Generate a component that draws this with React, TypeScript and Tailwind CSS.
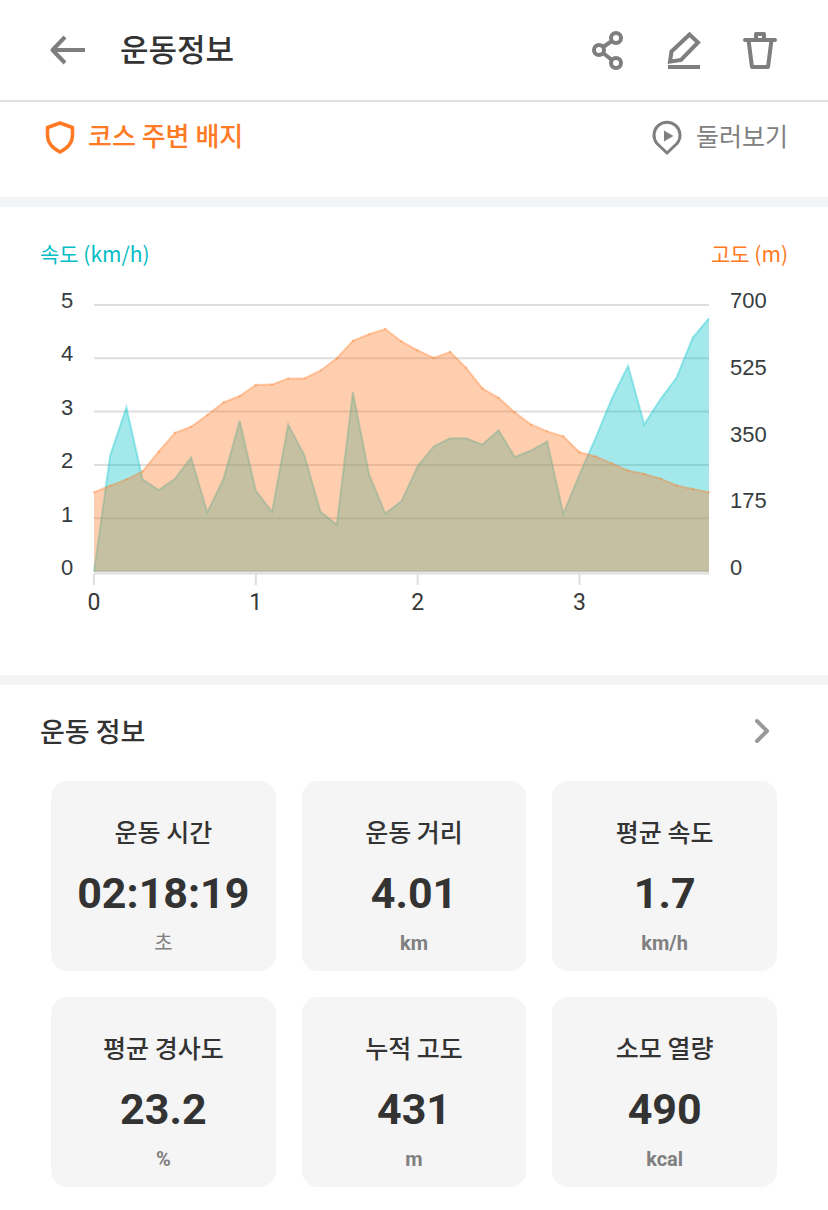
import React from "react";

const speed = [
  0, 2.18, 3.08, 1.73, 1.53, 1.74, 2.14, 1.11, 1.74, 2.83, 1.52, 1.12, 2.76, 2.18, 1.12, 0.88, 3.37, 1.82, 1.09, 1.32,
  1.98, 2.35, 2.5, 2.5, 2.38, 2.65, 2.15, 2.27, 2.44, 1.09, 1.82, 2.51, 3.25, 3.86, 2.76, 3.23, 3.64, 4.39, 4.75,
];
const altitude = [
  208, 225, 242, 263, 315, 364, 380, 411, 444, 461, 490, 491, 507, 507, 528, 560, 606, 623, 637, 604, 581, 561, 577,
  535, 481, 456, 418, 386, 368, 355, 313, 302, 284, 265, 256, 244, 226, 217, 208,
];

const LEFT = 54;
const RIGHT = 669;
const TOP = 15;
const BASE = 281.5;
const STEP = (RIGHT - LEFT) / 38;

function points(values: number[], max: number) {
  return values.map((v, i) => [LEFT + i * STEP, BASE - (v / max) * (BASE - TOP)]);
}
const toLine = (p: number[][]) => "M" + p.map(([x, y]) => `${x.toFixed(1)} ${y.toFixed(1)}`).join("L");
const toArea = (p: number[][]) => `${toLine(p)}L${RIGHT} ${BASE}L${LEFT} ${BASE}Z`;

function Chart() {
  const s = points(speed, 5);
  const a = points(altitude, 700);
  const ticks = [0, 1, 2, 3, 4, 5];
  return (
    <svg viewBox="0 -5 748 340" className="block h-auto w-full" role="img" aria-label="속도 / 고도">
      <g stroke="#dedede" strokeWidth="2">
        {ticks.map((t) => {
          const y = BASE - (t / 5) * (BASE - TOP);
          return <path key={t} d={`M${LEFT} ${y}H${RIGHT}`} />;
        })}
        <path d={`M${LEFT} 283.5H${RIGHT}`} />
        {[0, 1, 2, 3].map((t) => (
          <path key={t} d={`M${LEFT + t * 10 * STEP} 284v11`} />
        ))}
      </g>
      <path d={toArea(s)} fill="#05c3cb" fillOpacity="0.37" />
      <path d={toLine(s)} fill="none" stroke="#05c3cb" strokeOpacity="0.35" strokeWidth="2" />
      <path d={toArea(a)} fill="#ff7a24" fillOpacity="0.37" />
      <path d={toLine(a)} fill="none" stroke="#ff7a24" strokeOpacity="0.35" strokeWidth="2" />
      {a.map(([x, y], i) => (
        <circle key={i} cx={x} cy={y} r="1.1" fill="#ff7a24" fillOpacity="0.4" />
      ))}
      <g className="font-['Liberation_Sans',sans-serif] text-[22px]" fill="#373d3f">
        {ticks.map((t) => (
          <text key={t} x="21" y={285 - t * 53.4}>
            {t}
          </text>
        ))}
        {[0, 175, 350, 525, 700].map((t, i) => (
          <text key={t} x="690" y={285 - i * 66.75}>
            {t}
          </text>
        ))}
      </g>
      <g className="font-['Roboto',sans-serif] text-[23px]" fill="#373737" textAnchor="middle">
        {[0, 1, 2, 3].map((t) => (
          <text key={t} x={LEFT + t * 10 * STEP} y="320">
            {t}
          </text>
        ))}
      </g>
    </svg>
  );
}

const stats = [
  { label: "운동 시간", value: "02:18:19", unit: "초", unitClass: "font-normal" },
  { label: "운동 거리", value: "4.01", unit: "km", unitClass: "font-bold" },
  { label: "평균 속도", value: "1.7", unit: "km/h", unitClass: "font-bold" },
  { label: "평균 경사도", value: "23.2", unit: "%", unitClass: "font-bold" },
  { label: "누적 고도", value: "431", unit: "m", unitClass: "font-bold" },
  { label: "소모 열량", value: "490", unit: "kcal", unitClass: "font-bold" },
];

export default function App() {
  return (
    <main className="w-full bg-white pb-6 font-['Noto_Sans_CJK_KR',sans-serif] text-[#333333]">
      <header className="flex h-[102px] items-center border-b-2 border-[#e0e0e0] pr-12 pl-12">
        <button type="button" aria-label="뒤로" className="mr-8 shrink-0">
          <svg width="40" height="40" viewBox="0 0 40 40" fill="none" stroke="#7e7e7e" strokeWidth="4">
            <path d="M37 20H5" />
            <path d="M17 7L4.5 20L17 33" strokeLinejoin="round" />
          </svg>
        </button>
        <h1 className="flex-1 pb-1 text-[31px] leading-10 font-medium">운동정보</h1>
        <div className="flex gap-9">
          <button type="button" aria-label="공유">
            <svg width="40" height="40" viewBox="0 0 40 40" fill="none" stroke="#7e7e7e" strokeWidth="4">
              <circle cx="11" cy="20" r="5" />
              <circle cx="28" cy="8" r="5" />
              <circle cx="28" cy="33" r="5" />
              <path d="M15 17L24 11M15 23L24 30" />
            </svg>
          </button>
          <button type="button" aria-label="편집">
            <svg width="40" height="40" viewBox="0 0 40 40" fill="none" stroke="#7e7e7e" strokeWidth="4">
              <path d="M25.5 4.500L34 12.500L17 30L6 31.7L7.500 21.5Z" />
              <path d="M4 37H36" />
            </svg>
          </button>
          <button type="button" aria-label="삭제">
            <svg
              width="40"
              height="40"
              viewBox="0 0 40 40"
              fill="none"
              stroke="#7e7e7e"
              strokeWidth="4"
              strokeLinejoin="round"
            >
              <path d="M5 10H35" strokeLinecap="round" />
              <path d="M16 10V4H24V10" />
              <path d="M8.500 10L12 37H28L31.500 10" />
            </svg>
          </button>
        </div>
      </header>

      <section className="flex h-[105px] items-start justify-between border-b-10 border-[#f1f3f5] px-10 pt-4">
        <a href="#badges" className="flex items-start gap-2 text-[26px] leading-[34px] font-medium text-[#ff7a24]">
          <svg width="40" height="38" viewBox="0 0 40 38" fill="none" stroke="currentColor" strokeWidth="3.5">
            <path d="M20 5L32.500 9.500V17C32.500 25 27 30.500 20 34C13 30.500 7.500 25 7.500 17V9.500Z" strokeLinejoin="round" />
          </svg>
          코스 주변 배지
        </a>
        <a href="#tour" className="flex items-start gap-2 text-[25px] leading-[34px] text-[#808080]">
          <svg width="40" height="38" viewBox="0 0 40 38">
            <path
              d="M19 35L8.800 25.300A13 13 0 1 1 29.200 25.300Z"
              fill="none"
              stroke="currentColor"
              strokeWidth="3"
            />
            <path d="M16 12.500L25.500 18L16 23.500Z" fill="currentColor" />
          </svg>
          둘러보기
        </a>
      </section>

      <section className="border-b-10 border-[#f1f3f5] px-10 pt-[30px] pb-[50px]">
        <div className="mb-4 flex justify-between text-[21px] leading-8">
          <span className="text-[#05bdc6]">속도 (km/h)</span>
          <span className="text-[#ff7a24]">고도 (m)</span>
        </div>
        <Chart />
      </section>

      <section>
        <div className="flex h-24 items-center justify-between pr-12 pb-1 pl-10">
          <h2 className="text-[27px] leading-10 font-medium">운동 정보</h2>
          <button type="button" aria-label="자세히">
            <svg
              width="36"
              height="36"
              viewBox="0 0 36 36"
              fill="none"
              stroke="#999999"
              strokeWidth="4"
              strokeLinecap="round"
              strokeLinejoin="round"
            >
              <path d="M13 8L23 18L13 28" />
            </svg>
          </button>
        </div>
        <div className="grid grid-cols-3 gap-[26px] px-[51px]">
          {stats.map((s) => (
            <article key={s.label} className="flex h-[190px] flex-col items-center rounded-2xl bg-[#f5f5f5] pt-[30px]">
              <h3 className="text-[25px] leading-10 font-medium">{s.label}</h3>
              <p className="mt-3 font-['Roboto',sans-serif] text-[43px] leading-[60px] font-bold">{s.value}</p>
              <p
                className={`mt-2 font-['Roboto','Noto_Sans_CJK_KR',sans-serif] text-[20px] leading-6 text-[#808080] ${s.unitClass}`}
              >
                {s.unit}
              </p>
            </article>
          ))}
        </div>
      </section>
    </main>
  );
}
